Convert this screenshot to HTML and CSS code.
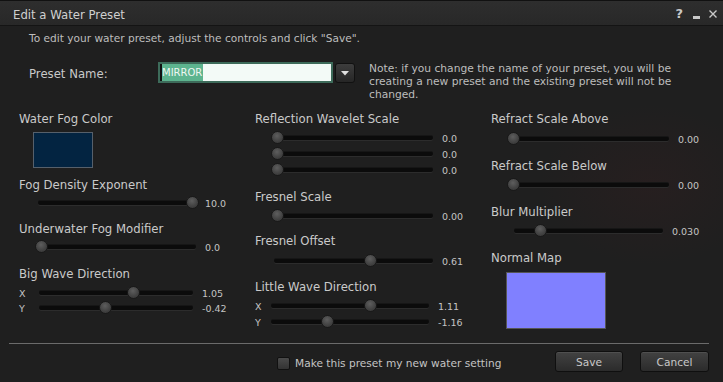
FILE: index.html
```html
<!DOCTYPE html>
<html lang="en">
<head>
  <meta charset="UTF-8">
  <meta name="viewport" content="width=device-width, initial-scale=1.0">
  <title>Edit a Water Preset</title>
  <link rel="stylesheet" href="styles.css">
</head>
<body>
  <div class="window">
    <div class="titlebar">
      <span class="title">Edit a Water Preset</span>
      <div class="title-icons">
        <span class="icon-help">?</span>
        <span class="icon-min"></span>
        <svg class="icon-close" width="8" height="8" viewBox="0 0 8 8">
          <path d="M0.5 0.5 L7.5 7.5 M7.5 0.5 L0.5 7.5" stroke="#c8c8c8" stroke-width="1.4" fill="none"/>
        </svg>
      </div>
    </div>

    <p class="intro">To edit your water preset, adjust the controls and click "Save".</p>

    <div class="preset-row">
      <span class="preset-label">Preset Name:</span>
      <div class="combo">
        <div class="combo-input"><span class="cursor"></span><span class="selected">MIRROR</span></div>
        <div class="combo-btn">
          <svg width="8" height="5" viewBox="0 0 8 5"><path d="M0 0 H8 L4 4.5 Z" fill="#e0e0e0"/></svg>
        </div>
      </div>
      <p class="note">Note: if you change the name of your preset, you will be creating a new preset and the existing preset will not be changed.</p>
    </div>

    <div class="columns">
      <div class="col col-a">
        <div class="label">Water Fog Color</div>
        <div class="swatch-fog"></div>

        <div class="label gap-10">Fog Density Exponent</div>
        <div class="slider-row gap-4">
          <div class="slider"><span class="knob" style="--p: 1"></span></div>
          <span class="value">10.0</span>
        </div>

        <div class="label gap-12">Underwater Fog Modifier</div>
        <div class="slider-row gap-4">
          <div class="slider"><span class="knob" style="--p: 0"></span></div>
          <span class="value">0.0</span>
        </div>

        <div class="label gap-13">Big Wave Direction</div>
        <div class="slider-row axis-row gap-5">
          <span class="axis">X</span>
          <div class="slider"><span class="knob" style="--p: 0.622"></span></div>
          <span class="value">1.05</span>
        </div>
        <div class="slider-row axis-row gap-1">
          <span class="axis">Y</span>
          <div class="slider"><span class="knob" style="--p: 0.426"></span></div>
          <span class="value">-0.42</span>
        </div>
      </div>

      <div class="col col-b">
        <div class="label">Reflection Wavelet Scale</div>
        <div class="slider-row gap-5">
          <div class="slider"><span class="knob" style="--p: 0"></span></div>
          <span class="value">0.0</span>
        </div>
        <div class="slider-row gap-2">
          <div class="slider"><span class="knob" style="--p: 0"></span></div>
          <span class="value">0.0</span>
        </div>
        <div class="slider-row gap-2">
          <div class="slider"><span class="knob" style="--p: 0"></span></div>
          <span class="value">0.0</span>
        </div>

        <div class="label gap-13">Fresnel Scale</div>
        <div class="slider-row gap-5">
          <div class="slider"><span class="knob" style="--p: 0"></span></div>
          <span class="value">0.00</span>
        </div>

        <div class="label gap-11">Fresnel Offset</div>
        <div class="slider-row gap-6">
          <div class="slider"><span class="knob" style="--p: 0.61"></span></div>
          <span class="value">0.61</span>
        </div>

        <div class="label gap-12">Little Wave Direction</div>
        <div class="slider-row axis-row gap-5">
          <span class="axis">X</span>
          <div class="slider"><span class="knob" style="--p: 0.638"></span></div>
          <span class="value">1.11</span>
        </div>
        <div class="slider-row axis-row gap-2">
          <span class="axis">Y</span>
          <div class="slider"><span class="knob" style="--p: 0.349"></span></div>
          <span class="value">-1.16</span>
        </div>
      </div>

      <div class="col col-c">
        <div class="label">Refract Scale Above</div>
        <div class="slider-row gap-6">
          <div class="slider"><span class="knob" style="--p: 0"></span></div>
          <span class="value">0.00</span>
        </div>

        <div class="label gap-13">Refract Scale Below</div>
        <div class="slider-row gap-5">
          <div class="slider"><span class="knob" style="--p: 0"></span></div>
          <span class="value">0.00</span>
        </div>

        <div class="label gap-13">Blur Multiplier</div>
        <div class="slider-row short-row gap-5">
          <div class="slider"><span class="knob" style="--p: 0.161"></span></div>
          <span class="value">0.030</span>
        </div>

        <div class="label gap-13">Normal Map</div>
        <div class="swatch-normal"></div>
      </div>
    </div>

    <div class="separator"></div>

    <div class="footer">
      <label class="check"><span class="check-box"></span>Make this preset my new water setting</label>
      <button class="btn btn-save">Save</button>
      <button class="btn btn-cancel">Cancel</button>
    </div>
  </div>
</body>
</html>
```

FILE: styles.css
```css
body {
  margin: 0;
  background-color: #1f1f1f;
  font-family: "DejaVu Sans", "Noto Sans", sans-serif;
}

.window {
  width: 723px;
  height: 382px;
  overflow: hidden;
  color: #c9c9c9;
  background:
    radial-gradient(ellipse 110px 80px at 650px 185px, rgba(60, 30, 32, 0.25), transparent),
    #1f1f1f;
}

/* title bar */
.titlebar {
  display: flex;
  align-items: flex-start;
  box-sizing: border-box;
  height: 26px;
  padding: 7px 6px 0 13px;
  border-top: 1px solid #111;
  border-bottom: 1px solid #141414;
  background: linear-gradient(#2e2e2e, #282828);
}

.title {
  font-size: 11.7px;
  line-height: 14px;
  color: #d0d0d0;
}

.title-icons {
  display: flex;
  align-items: flex-start;
  margin-left: auto;
}

.icon-help {
  margin-top: -1px;
  font-size: 13px;
  font-weight: bold;
  line-height: 14px;
  color: #c8c8c8;
}

.icon-min {
  width: 7px;
  height: 3px;
  margin: 8px 0 0 10px;
  background: #c8c8c8;
}

.icon-close {
  margin: 2px 0 0 9px;
}

/* intro + preset name */
.intro {
  margin: 6px 0 0 29px;
  font-size: 10.6px;
  line-height: 13px;
  color: #bdbdbd;
}

.preset-row {
  display: flex;
  align-items: flex-start;
  height: 50px;
  margin-top: 17px;
}

.preset-label {
  width: 129px;
  margin: 5px 0 0 29px;
  font-size: 11.7px;
  line-height: 14px;
}

.combo {
  display: flex;
  align-items: flex-start;
  gap: 2px;
}

.combo-input {
  display: flex;
  width: 171px;
  height: 17px;
  border: 2px solid #3d6b5a;
  background: #f3faf7;
}

.cursor {
  width: 2px;
  background: #111;
}

.selected {
  padding-right: 1px;
  background: #5db48f;
  color: #eef6f2;
  font-size: 10px;
  line-height: 17px;
}

.combo-btn {
  display: flex;
  align-items: center;
  justify-content: center;
  width: 18px;
  height: 18px;
  margin-top: 1px;
  border: 1px solid #111;
  border-radius: 3px;
  background: linear-gradient(#3d3d3d, #262626);
}

.note {
  width: 320px;
  margin: 1px 0 0 14px;
  font-size: 10.7px;
  line-height: 12.8px;
  color: #bdbdbd;
}

/* columns */
.columns {
  display: flex;
  height: 231px;
}

.col {
  display: flex;
  flex-direction: column;
  align-items: flex-start;
  width: 236px;
}

.col-a {
  margin-left: 19px;
}

.col-c {
  width: 232px;
}

.label {
  font-size: 11.7px;
  line-height: 14px;
  color: #cacaca;
  white-space: nowrap;
}

.gap-1 { margin-top: 1px; }
.gap-2 { margin-top: 2px; }
.gap-4 { margin-top: 4px; }
.gap-5 { margin-top: 5px; }
.gap-6 { margin-top: 6px; }
.gap-10 { margin-top: 10px; }
.gap-11 { margin-top: 11px; }
.gap-12 { margin-top: 12px; }
.gap-13 { margin-top: 13px; }

.swatch-fog {
  box-sizing: border-box;
  width: 60px;
  height: 36px;
  margin: 6px 0 0 14px;
  border: 1px solid #56606b;
  background: #032441;
}

.swatch-normal {
  box-sizing: border-box;
  width: 100px;
  height: 57px;
  margin: 7px 0 0 15px;
  border: 1px solid #555;
  background: #8080ff;
}

/* sliders */
.slider-row {
  display: flex;
  align-items: center;
  height: 14px;
}

.slider {
  position: relative;
  height: 14px;
  margin-left: 16px;
  width: 165px;
}

.slider::before {
  content: "";
  position: absolute;
  left: 3px;
  right: 3px;
  top: 5px;
  height: 4px;
  border-radius: 2px;
  background: #0b0b0b;
  box-shadow: 0 1px 0 #2c2c2c, 0 -1px 0 #161616;
}

.knob {
  position: absolute;
  top: 0;
  left: calc(var(--p) * (100% - 13px));
  box-sizing: border-box;
  width: 13px;
  height: 13px;
  border: 1px solid #191919;
  border-radius: 50%;
  background: radial-gradient(circle at 45% 35%, #5e5e5e, #434343 55%, #303030);
}

.axis {
  font-size: 9.5px;
  color: #c4c4c4;
}

.value {
  margin-left: 6px;
  font-size: 9.5px;
  color: #c4c4c4;
  white-space: nowrap;
}

.col-a .slider { width: 164px; }
.col-a .axis { width: 17px; }
.col-a .axis-row .slider { margin-left: 0; width: 160px; }

.col-b .axis { width: 13px; }
.col-b .axis-row .slider { margin-left: 0; width: 164px; }

.col-c .short-row .slider { margin-left: 20px; width: 155px; }

/* footer */
.separator {
  height: 1px;
  margin: 0 14px 0 9px;
  background: #6b6b6b;
}

.footer {
  display: flex;
  align-items: flex-start;
  height: 21px;
  margin-top: 7px;
  padding-right: 14px;
}

.check {
  display: flex;
  align-items: center;
  gap: 5px;
  margin: 6px 0 0 277px;
  font-size: 10.6px;
  line-height: 13px;
  color: #c4c4c4;
}

.check-box {
  box-sizing: border-box;
  width: 13px;
  height: 13px;
  border: 1px solid #111;
  border-radius: 2px;
  background: linear-gradient(#4a4a4a, #333);
}

.btn {
  box-sizing: border-box;
  height: 21px;
  padding: 0;
  border: 1px solid #0f0f0f;
  border-radius: 3px;
  background: linear-gradient(#424242, #2b2b2b);
  box-shadow: inset 0 1px 0 rgba(255, 255, 255, 0.08);
  color: #c8c8c8;
  font-family: "DejaVu Sans", sans-serif;
  font-size: 10.6px;
}

.btn-save {
  width: 68px;
  margin-left: auto;
}

.btn-cancel {
  width: 69px;
  margin-left: 17px;
}
```
